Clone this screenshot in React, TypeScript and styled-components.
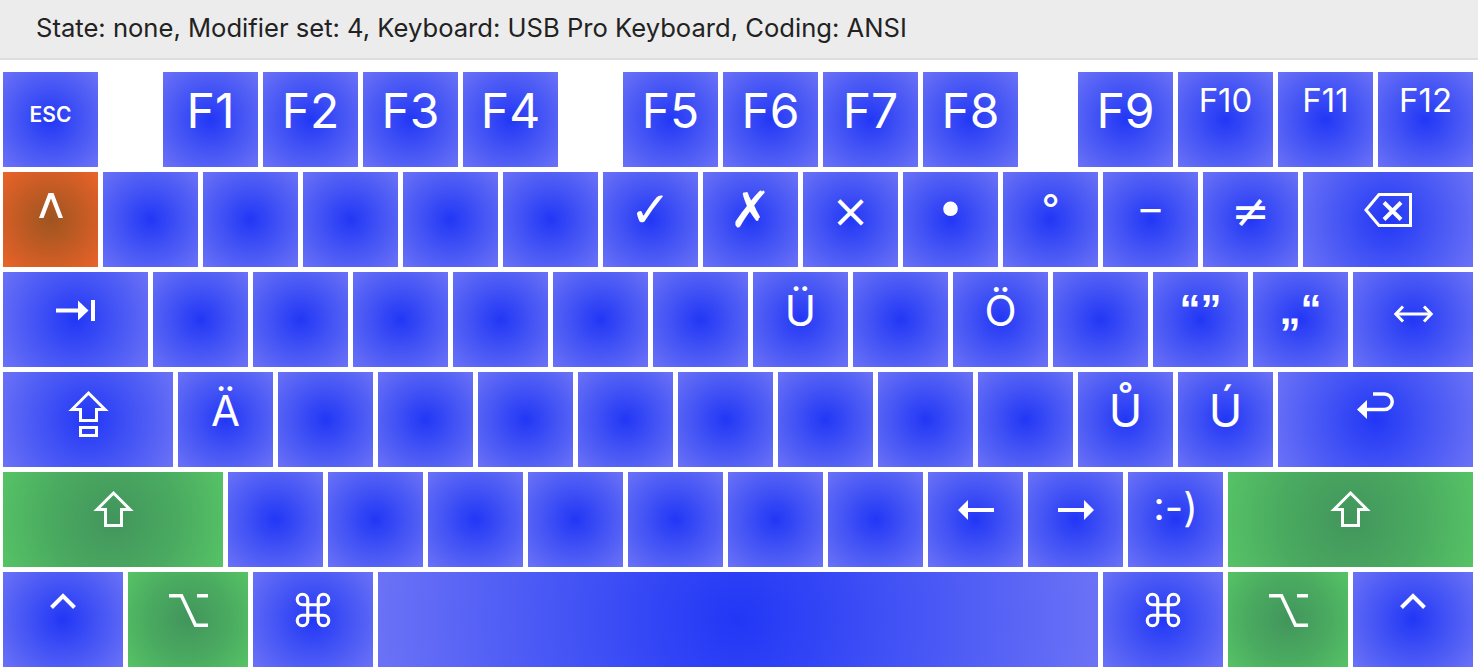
import React from 'react';
import styled, { createGlobalStyle } from 'styled-components';
import { Command } from 'lucide-react';

type Tone = 'blue' | 'green' | 'orange';

const GlobalStyle = createGlobalStyle`
  html, body { margin: 0; padding: 0; background: #ffffff; }
  body { font-family: Inter, "Noto Sans", "DejaVu Sans", sans-serif; }
`;

const gradients: Record<Tone, string> = {
  blue: 'radial-gradient(circle farthest-corner at 50% 50%, #2237f6 0%, #4656f5 50%, #6b72f6 100%)',
  green: 'radial-gradient(circle farthest-corner at 50% 50%, #42955c 0%, #4aab60 55%, #56c366 100%)',
  orange: 'radial-gradient(circle farthest-corner at 50% 50%, #9e5520 0%, #c45b24 50%, #ea632a 100%)',
};

const Page = styled.div`
  width: 1478px;
  height: 670px;
  overflow: hidden;
  background: #ffffff;
`;

const StatusBar = styled.header`
  height: 60px;
  box-sizing: border-box;
  background: #ececec;
  border-bottom: 2px solid #dedede;
  display: flex;
  align-items: center;
  padding: 0 0 4px 36px;
  font-size: 25.6px;
  color: #222222;
`;

const Board = styled.div`
  display: flex;
  flex-direction: column;
  gap: 5px;
  padding: 12px 0 0 3px;
`;

const Row = styled.div`
  display: flex;
  gap: 5px;
`;

const Key = styled.div<{ $u: number; $tone: Tone }>`
  flex: none;
  width: ${(p) => p.$u * 100 - 5}px;
  height: 95px;
  display: flex;
  flex-direction: column;
  align-items: center;
  color: #ffffff;
  background: ${(p) => gradients[p.$tone]};
`;

const Gap = styled.div<{ $w: number }>`
  flex: none;
  width: ${(p) => p.$w}px;
`;

const Label = styled.span<{ $size: number; $top: number; $font?: string; $weight?: number }>`
  display: block;
  font-family: ${(p) => p.$font ?? 'Inter, "Noto Sans", "DejaVu Sans", sans-serif'};
  font-size: ${(p) => p.$size}px;
  font-weight: ${(p) => p.$weight ?? 400};
  line-height: 1;
  margin-top: ${(p) => p.$top}px;
  white-space: pre;
`;

const Glyph = styled.svg<{ $top: number }>`
  display: block;
  margin-top: ${(p) => p.$top}px;
  overflow: visible;
`;

const CmdWrap = styled.div<{ $top: number }>`
  margin-top: ${(p) => p.$top}px;
  line-height: 0;
`;

/* ---------- icons ---------- */
const TabIcon = () => (
  <Glyph $top={28} width="39" height="21" viewBox="0 0 39 21" fill="#fff">
    <rect x="0" y="8.5" width="24" height="4" />
    <polygon points="22,0.5 32.5,10.5 22,20.5" />
    <rect x="35" y="0" width="4" height="21" />
  </Glyph>
);

const BackspaceIcon = () => (
  <Glyph $top={21} width="48" height="34" viewBox="0 0 48 34" fill="none" stroke="#fff">
    <polygon points="2,17 15,1.5 46.5,1.5 46.5,32.5 15,32.5" strokeWidth="3" strokeLinejoin="miter" />
    <path d="M20 9.5 L37 26.5 M37 9.5 L20 26.5" strokeWidth="4" />
  </Glyph>
);

const ShiftIcon = ({ top }: { top: number }) => (
  <Glyph $top={top} width="37" height="36" viewBox="0 0 37 36" fill="none" stroke="#fff" strokeWidth="3">
    <polygon points="18.5,2 35,18.5 26.5,18.5 26.5,34.5 10.5,34.5 10.5,18.5 2,18.5" strokeLinejoin="miter" />
  </Glyph>
);

const ShiftLockIcon = () => (
  <Glyph $top={19} width="37" height="46" viewBox="0 0 37 46" fill="none" stroke="#fff" strokeWidth="3">
    <polygon points="18.5,2 35,18.5 26.5,18.5 26.5,29.5 10.5,29.5 10.5,18.5 2,18.5" />
    <rect x="10.5" y="36.5" width="16" height="8" />
  </Glyph>
);

const ReturnIcon = () => (
  <Glyph $top={20} width="37" height="28" viewBox="0 0 37 28" fill="none" stroke="#fff">
    <path d="M16 2 H27.5 A7.75 7.75 0 0 1 27.5 17.5 H8" strokeWidth="3.5" />
    <polygon points="0,17.5 10,8 10,27" fill="#fff" stroke="none" />
  </Glyph>
);

const LeftRightIcon = () => (
  <Glyph $top={33} width="39" height="18" viewBox="0 0 39 18" fill="none" stroke="#fff" strokeWidth="3">
    <path d="M2 9 H37" />
    <polyline points="9,1.5 1.8,9 9,16.5" />
    <polyline points="30,1.5 37.2,9 30,16.5" />
  </Glyph>
);

const ArrowIcon = ({ dir }: { dir: 'left' | 'right' }) => (
  <Glyph
    $top={28}
    width="36"
    height="20"
    viewBox="0 0 36 20"
    fill="#fff"
    style={dir === 'right' ? { transform: 'scaleX(-1)' } : undefined}
  >
    <polygon points="0,10 10,0 10,20" />
    <rect x="9" y="8" width="27" height="4" />
  </Glyph>
);

const ControlIcon = ({ top }: { top: number }) => (
  <Glyph $top={top} width="26" height="16" viewBox="0 0 26 16" fill="none" stroke="#fff" strokeWidth="4">
    <polyline points="1.5,14.5 13,3 24.5,14.5" strokeLinejoin="miter" />
  </Glyph>
);

const CaretIcon = () => (
  <Glyph $top={21} width="24" height="25" viewBox="0 0 24 25" fill="#fff">
    <polygon points="9.5,0 14.5,0 24,25 19.5,25 12,5.5 4.5,25 0,25" />
  </Glyph>
);

const OptionIcon = () => (
  <Glyph $top={22} width="39" height="33" viewBox="0 0 39 33" fill="none" stroke="#fff" strokeWidth="3.5">
    <path d="M0 1.75 H12.5 L26.5 31.25 H39" strokeLinejoin="miter" />
    <path d="M28 1.75 H39" />
  </Glyph>
);

const CommandIcon = () => (
  <CmdWrap $top={17}>
    <Command size={42} strokeWidth={1.8} color="#ffffff" />
  </CmdWrap>
);

/* ---------- helpers ---------- */
const FBig = ({ t }: { t: string }) => (
  <Key $u={1} $tone="blue">
    <Label $size={48} $top={15}>{t}</Label>
  </Key>
);

const FSmall = ({ t }: { t: string }) => (
  <Key $u={1} $tone="blue">
    <Label $size={33} $top={12}>{t}</Label>
  </Key>
);

const Blank = () => <Key $u={1} $tone="blue" />;

const Sym = ({
  t,
  size = 40,
  top = 18,
  font,
  weight,
}: {
  t: string;
  size?: number;
  top?: number;
  font?: string;
  weight?: number;
}) => (
  <Key $u={1} $tone="blue">
    <Label $size={size} $top={top} $font={font} $weight={weight}>
      {t}
    </Label>
  </Key>
);

const blanks = (n: number) => Array.from({ length: n }, (_, i) => <Blank key={`b${i}`} />);

const dejavu = '"DejaVu Sans", Inter, sans-serif';
const quoteFont = '"Liberation Sans", Arial, sans-serif';

export default function App() {
  return (
    <Page>
      <GlobalStyle />
      <StatusBar>State: none, Modifier set: 4, Keyboard: USB Pro Keyboard, Coding: ANSI</StatusBar>
      <Board>
        <Row>
          <Key $u={1} $tone="blue">
            <Label $size={21} $top={32} $weight={600}>ESC</Label>
          </Key>
          <Gap $w={55} />
          <FBig t="F1" />
          <FBig t="F2" />
          <FBig t="F3" />
          <FBig t="F4" />
          <Gap $w={55} />
          <FBig t="F5" />
          <FBig t="F6" />
          <FBig t="F7" />
          <FBig t="F8" />
          <Gap $w={50} />
          <FBig t="F9" />
          <FSmall t="F10" />
          <FSmall t="F11" />
          <FSmall t="F12" />
        </Row>

        <Row>
          <Key $u={1} $tone="orange">
            <CaretIcon />
          </Key>
          {blanks(5)}
          <Sym t="✓" size={50} top={13} font={dejavu} />
          <Sym t="✗" size={50} top={13} font={dejavu} />
          <Sym t="×" size={46} top={16} font={dejavu} />
          <Sym t="•" size={50} top={13} font={dejavu} />
          <Sym t="°" size={40} top={17} />
          <Sym t="–" size={40} top={17} />
          <Sym t="≠" size={46} top={16} font={dejavu} />
          <Key $u={1.75} $tone="blue">
            <BackspaceIcon />
          </Key>
        </Row>

        <Row>
          <Key $u={1.5} $tone="blue">
            <TabIcon />
          </Key>
          {blanks(6)}
          <Sym t="Ü" size={42} top={18} />
          <Blank />
          <Sym t="Ö" size={42} top={18} />
          <Blank />
          <Sym t="“”" size={42} top={17} font={quoteFont} weight={700} />
          <Sym t="„“" size={42} top={17} font={quoteFont} weight={700} />
          <Key $u={1.25} $tone="blue">
            <LeftRightIcon />
          </Key>
        </Row>

        <Row>
          <Key $u={1.75} $tone="blue">
            <ShiftLockIcon />
          </Key>
          <Sym t="Ä" size={42} top={18} />
          {blanks(8)}
          <Sym t="Ů" size={45} top={16} />
          <Sym t="Ú" size={45} top={16} />
          <Key $u={2} $tone="blue">
            <ReturnIcon />
          </Key>
        </Row>

        <Row>
          <Key $u={2.25} $tone="green">
            <ShiftIcon top={19} />
          </Key>
          {blanks(7)}
          <Key $u={1} $tone="blue">
            <ArrowIcon dir="left" />
          </Key>
          <Key $u={1} $tone="blue">
            <ArrowIcon dir="right" />
          </Key>
          <Sym t=":-)" size={40} top={18} />
          <Key $u={2.5} $tone="green">
            <ShiftIcon top={19} />
          </Key>
        </Row>

        <Row>
          <Key $u={1.25} $tone="blue">
            <ControlIcon top={21} />
          </Key>
          <Key $u={1.25} $tone="green">
            <OptionIcon />
          </Key>
          <Key $u={1.25} $tone="blue">
            <CommandIcon />
          </Key>
          <Key $u={7.25} $tone="blue" />
          <Key $u={1.25} $tone="blue">
            <CommandIcon />
          </Key>
          <Key $u={1.25} $tone="green">
            <OptionIcon />
          </Key>
          <Key $u={1.25} $tone="blue">
            <ControlIcon top={21} />
          </Key>
        </Row>
      </Board>
    </Page>
  );
}
